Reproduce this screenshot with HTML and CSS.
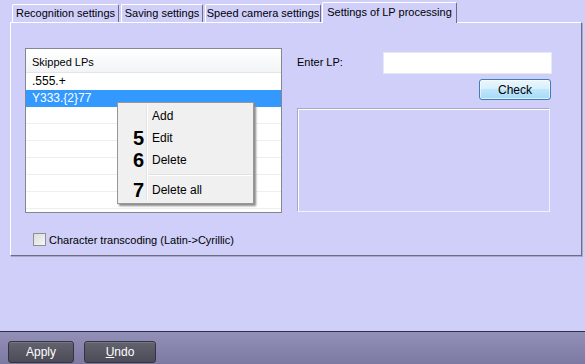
FILE: index.html
```html
<!DOCTYPE html>
<html lang="en">
<head>
  <meta charset="UTF-8">
  <title>Settings of LP processing</title>
  <link rel="stylesheet" href="styles.css">
</head>
<body>
  <div class="window">
    <!-- Tab strip -->
    <div class="tabs">
      <div class="tab tab-recognition">Recognition settings</div>
      <div class="tab tab-saving">Saving settings</div>
      <div class="tab tab-speed">Speed camera settings</div>
      <div class="tab tab-lp active">Settings of LP processing</div>
    </div>

    <div class="panel">
      <div class="content">
        <div class="list-wrap">
          <div class="list">
            <div class="list-header">Skipped LPs</div>
            <div class="row">.555.+</div>
            <div class="row selected">Y333.{2}77</div>
            <div class="row"></div>
            <div class="row"></div>
            <div class="row"></div>
            <div class="row"></div>
            <div class="row"></div>
            <div class="row last"></div>
          </div>

          <!-- Context menu over the list -->
          <div class="menu">
            <div class="menu-item"><span class="num"></span><span class="label">Add</span></div>
            <div class="menu-item"><span class="num">5</span><span class="label">Edit</span></div>
            <div class="menu-item"><span class="num">6</span><span class="label">Delete</span></div>
            <div class="menu-sep"><span class="num"></span><span class="line"></span></div>
            <div class="menu-item"><span class="num">7</span><span class="label">Delete all</span></div>
          </div>
        </div>

        <div class="check-col">
          <div class="enter-row">
            <span class="enter-label">Enter LP:</span>
            <div class="text-input"></div>
          </div>
          <button class="check-btn">Check</button>
          <div class="result-box"></div>
        </div>
      </div>

      <label class="checkbox-row">
        <span class="checkbox"></span>
        Character transcoding (Latin-&gt;Cyrillic)
      </label>
    </div>

    <div class="spacer"></div>

    <!-- Bottom bar -->
    <div class="bottom-bar">
      <button class="dark-btn apply-btn">Apply</button>
      <button class="dark-btn undo-btn"><u>U</u>ndo</button>
    </div>
  </div>
</body>
</html>
```

FILE: styles.css
```css
* {
  margin: 0;
  padding: 0;
  box-sizing: border-box;
}

body {
  font-family: "Liberation Sans", Arial, sans-serif;
  font-size: 11px;
  color: #000;
  background-color: #cfcffa;
  overflow: hidden;
}

.window {
  display: flex;
  flex-direction: column;
  width: 585px;
  height: 364px;
}

/* Tabs */
.tabs {
  display: flex;
  align-items: flex-end;
  height: 22px;
  padding-left: 12px;
  gap: 2px;
}

.tab {
  height: 18px;
  line-height: 17px;
  text-align: center;
  background-color: #cfcffa;
  border-top: 1px solid #fff;
  border-left: 1px solid #fff;
  border-right: 1px solid #6e6e80;
  border-radius: 2px 2px 0 0;
  white-space: nowrap;
}

.tab-recognition { width: 107px; }
.tab-saving { width: 82px; }
.tab-speed { width: 116px; }

.tab.active {
  width: 135px;
  height: 20px;
  line-height: 18px;
  margin-left: -1px;
  position: relative;
  z-index: 1;
  margin-bottom: -1px;
  height: 21px;
}

/* Main panel */
.panel {
  margin: 0 3px 0 10px;
  height: 234px;
  border-top: 1px solid #fff;
  border-left: 1px solid #fff;
  border-right: 1px solid #6e6e80;
  border-bottom: 1px solid #6e6e80;
  box-shadow: 1px 1px 0 #a8a8c8;
  padding: 25px 0 0 14px;
}

.content {
  display: flex;
  gap: 15px;
}

.list-wrap {
  position: relative;
}

.list {
  width: 257px;
  height: 165px;
  background-color: #fff;
  border: 1px solid #828790;
  overflow: hidden;
}

.list-header {
  height: 24px;
  line-height: 26px;
  padding-left: 6px;
  background: linear-gradient(#ffffff, #f3f4f6);
  border-bottom: 1px solid #e4e5e7;
}

.row {
  height: 17px;
  line-height: 17px;
  padding-left: 6px;
  font-size: 12px;
  border-bottom: 1px solid #eeeeee;
}

.row:nth-child(2) {
  border-bottom-color: #fff;
}

.row.selected {
  background-color: #3399ff;
  color: #fff;
  border-bottom-color: #3399ff;
}

/* Context menu */
.menu {
  position: absolute;
  left: 92px;
  top: 54px;
  width: 137px;
  padding: 2px 0;
  background-color: #f0f0f0;
  border: 1px solid #979797;
  box-shadow: 2px 2px 2px #8a8a8a;
  font-size: 12px;
}

.menu-item,
.menu-sep {
  display: flex;
  align-items: center;
}

.menu-item {
  height: 22px;
}

.num {
  width: 29px;
  height: 100%;
  padding-right: 2px;
  text-align: right;
  font-size: 20px;
  font-weight: bold;
  line-height: 22px;
  border-right: 1px solid #e2e3e3;
  box-shadow: 1px 0 0 #fff;
}

.label {
  padding-left: 5px;
}

.menu-sep {
  height: 8px;
}

.menu-sep .line {
  flex: 1;
  margin: 0 2px 0 2px;
  border-top: 1px solid #e0e0e0;
  border-bottom: 1px solid #fff;
}

/* Right column */
.check-col {
  width: 255px;
  padding-top: 4px;
  display: flex;
  flex-direction: column;
  align-items: flex-end;
}

.enter-row {
  display: flex;
  align-items: center;
  width: 100%;
}

.enter-label {
  flex: 1;
  padding-bottom: 2px;
}

.text-input {
  width: 169px;
  height: 22px;
  background-color: #fff;
  border: 1px solid #e8e8f0;
}

.check-btn {
  margin-top: 5px;
  margin-right: 1px;
  width: 72px;
  height: 21px;
  font-family: "Liberation Sans", Arial, sans-serif;
  font-size: 12px;
  color: #000;
  border: 1px solid #3c7fb1;
  border-radius: 3px;
  background: linear-gradient(#eaf6fd 0%, #d9f0fc 45%, #bee6fd 50%, #a7d9f5 100%);
  box-shadow: inset 0 0 0 1px rgba(255, 255, 255, 0.6);
}

.result-box {
  align-self: flex-start;
  margin-top: 8px;
  width: 253px;
  height: 104px;
  border: 1px solid #f2f2ff;
  border-top-color: #a8a8c0;
  border-left-color: #a8a8c0;
  box-shadow: inset 1px 1px 0 #fff;
}

/* Checkbox */
.checkbox-row {
  display: flex;
  align-items: center;
  gap: 3px;
  margin-top: 20px;
  margin-left: 8px;
  font-size: 11px;
}

.checkbox {
  width: 13px;
  height: 13px;
  border: 1px solid #8f8f8f;
  background: linear-gradient(135deg, #dcdcdc, #f6f6f6);
}

.spacer {
  flex: 1;
}

/* Bottom bar */
.bottom-bar {
  height: 33px;
  border-top: 1px solid #2e2e40;
  background: linear-gradient(#928fb8, #7c7aa2);
  display: flex;
  gap: 10px;
  padding: 9px 0 0 8px;
}

.dark-btn {
  height: 22px;
  font-family: "Liberation Sans", Arial, sans-serif;
  font-size: 12px;
  color: #fff;
  border: 1px solid #34343e;
  border-radius: 3px;
  background: linear-gradient(#626270, #4c4c58);
  box-shadow: inset 0 1px 0 rgba(255, 255, 255, 0.15);
}

.apply-btn { width: 66px; }
.undo-btn { width: 72px; }
```
